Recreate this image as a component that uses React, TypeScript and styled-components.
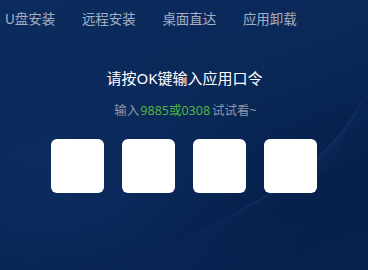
import React from "react";
import styled, { createGlobalStyle } from "styled-components";

const Global = createGlobalStyle`
  html, body { margin: 0; padding: 0; background: #0a2757; }
  * { box-sizing: border-box; }
`;

const Screen = styled.div`
  position: relative;
  width: 368px;
  height: 270px;
  overflow: hidden;
  font-family: "Noto Sans", "Noto Sans CJK SC", sans-serif;
  background:
    radial-gradient(ellipse 220px 160px at 70px 200px, rgba(14, 48, 104, 0.55), rgba(14, 48, 104, 0) 100%),
    linear-gradient(160deg, #0c2c5e 0%, #0a2858 40%, #061f4a 75%, #082350 100%);
  display: flex;
  flex-direction: column;
  align-items: stretch;
`;

const Waves = styled.svg`
  position: absolute;
  left: 0;
  top: 0;
  width: 368px;
  height: 270px;
  pointer-events: none;
`;

const Tabs = styled.nav`
  position: relative;
  display: flex;
  gap: 26.5px;
  padding: 9px 0 0 5px;
`;

const Tab = styled.span`
  font-size: 13.5px;
  line-height: 20px;
  color: #a3b0c4;
  white-space: nowrap;
`;

const Title = styled.div`
  position: relative;
  margin-top: 39px;
  text-align: center;
  font-size: 15px;
  line-height: 20px;
  color: #ffffff;
  padding-left: 1px;
`;

const Hint = styled.div`
  position: relative;
  margin-top: 15px;
  text-align: center;
  font-size: 12.5px;
  line-height: 16px;
  color: #8996a8;
  padding-left: 3px;
`;

const Code = styled.span`
  color: #52b347;
  margin: 0 2px 0 1px;
`;

const Boxes = styled.div`
  position: relative;
  margin-top: 20px;
  display: flex;
  justify-content: center;
  gap: 18px;
`;

const Box = styled.div`
  width: 53px;
  height: 54px;
  border-radius: 6px;
  background: #ffffff;
`;

export default function App() {
  const lines = Array.from({ length: 28 }, (_, i) => i);
  return (
    <>
      <Global />
      <Screen>
        <Waves viewBox="0 0 368 270">
          {lines.map((i) => (
            <path
              key={i}
              d={`M ${120 + i * 6} 275 C ${210 + i * 4} ${230 - i * 1.5}, ${260 + i * 3} ${190 - i * 2}, 380 ${150 - i * 3}`}
              fill="none"
              stroke="#3c5f9a"
              strokeOpacity={0.12}
              strokeWidth={0.6}
            />
          ))}
        </Waves>
        <Tabs>
          <Tab>U盘安装</Tab>
          <Tab>远程安装</Tab>
          <Tab>桌面直达</Tab>
          <Tab>应用卸载</Tab>
        </Tabs>
        <Title>请按OK键输入应用口令</Title>
        <Hint>
          输入<Code>9885或0308</Code>试试看~
        </Hint>
        <Boxes>
          <Box />
          <Box />
          <Box />
          <Box />
        </Boxes>
      </Screen>
    </>
  );
}
